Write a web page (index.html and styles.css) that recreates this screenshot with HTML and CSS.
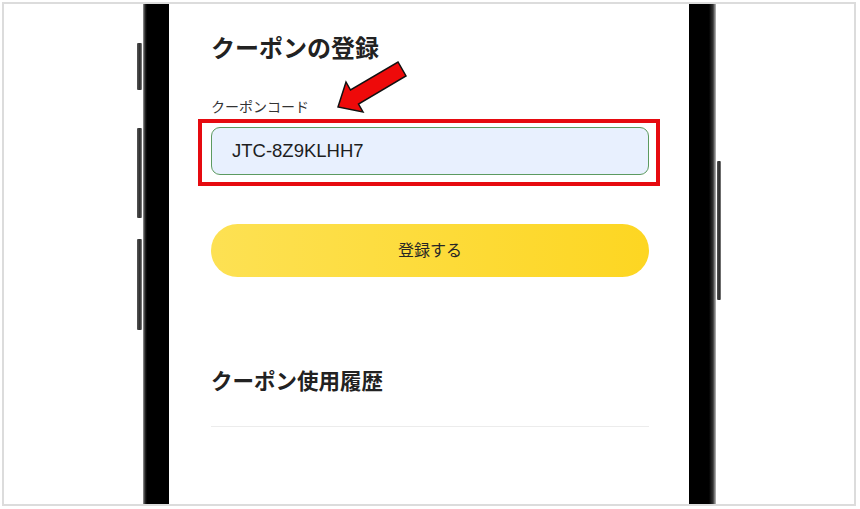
FILE: index.html
```html
<!DOCTYPE html>
<html lang="ja">
<head>
    <meta charset="UTF-8">
    <meta name="viewport" content="width=device-width, initial-scale=1.0">
    <title>クーポンの登録</title>
    <link rel="stylesheet" href="styles.css">
</head>
<body>
    <div class="frame">
        <div class="phone">
            <span class="side-btn left btn-1"></span>
            <span class="side-btn left btn-2"></span>
            <span class="side-btn left btn-3"></span>
            <span class="side-btn right btn-4"></span>

            <div class="screen">
                <h1 class="title">クーポンの登録</h1>

                <form class="coupon-form">
                    <label for="couponCode" class="field-label">クーポンコード</label>
                    <div class="field-wrap highlight">
                        <input type="text" id="couponCode" name="couponCode" class="field" value="JTC-8Z9KLHH7">
                    </div>
                    <button type="submit" class="submit-btn">登録する</button>
                </form>

                <h2 class="subtitle">クーポン使用履歴</h2>
                <div class="history"></div>
            </div>
        </div>
    </div>

    <!-- pointer to the code field -->
    <svg class="pointer" width="86" height="62" viewBox="330 55 86 62">
        <polygon points="338,107 346,82 350.5,90 398,62 406,76 358.5,104 363,112"
                 fill="#ee0a0a" stroke="#111" stroke-width="1.5" stroke-linejoin="miter"/>
    </svg>
</body>
</html>
```

FILE: styles.css
```css
* {
    box-sizing: border-box;
}
body {
    margin: 0;
    position: relative;
    width: 860px;
    height: 509px;
    overflow: hidden;
    background: #fff;
    font-family: "Noto Sans CJK JP", "Noto Sans", sans-serif;
}
.frame {
    margin: 2px 4px 0 2px;
    height: 504px;
    border: 2px solid #dcdcdc;
    overflow: hidden;
}
.phone {
    position: relative;
    margin-left: 139px;
    width: 573px;
    height: 520px;
    padding: 0 27px 0 26px;
    background: linear-gradient(to right, #9a9a9a 0, #2a2a2a 2px, #000 4px, #000 calc(100% - 7px), #333 calc(100% - 3px), #bdbdbd 100%);
}
.side-btn {
    position: absolute;
    width: 5px;
    background: linear-gradient(to right, #555, #2b2b2b 60%, #8a8a8a);
    border-radius: 1px;
}
.side-btn.left {
    left: -6px;
}
.side-btn.right {
    right: -5px;
    width: 4px;
}
.btn-1 { top: 39px; height: 47px; }
.btn-2 { top: 124px; height: 90px; }
.btn-3 { top: 235px; height: 91px; }
.btn-4 { top: 157px; height: 139px; }

.screen {
    height: 100%;
    background: #fff;
    padding: 26px 40px 0 42px;
}
.title {
    margin: 0;
    font-size: 24px;
    line-height: 34px;
    font-weight: 700;
    color: #222;
}
.coupon-form {
    margin: 32px 0 0;
}
.field-label {
    display: block;
    font-size: 14px;
    line-height: 20px;
    color: #333;
    margin-bottom: 11px;
}
.field-wrap {
    position: relative;
}
.highlight::before {
    content: "";
    position: absolute;
    top: -8px;
    left: -13px;
    right: -11px;
    bottom: -11px;
    border: 4px solid #e60a10;
}
.field {
    position: relative;
    display: block;
    width: 100%;
    height: 48px;
    padding: 0 20px;
    border: 1px solid #5c9a60;
    border-radius: 9px;
    background: #e8f0fe;
    font-family: "Liberation Sans", Arial, sans-serif;
    font-size: 18.5px;
    color: #1e1e1e;
    outline: none;
}
.submit-btn {
    display: block;
    width: 100%;
    height: 53px;
    margin-top: 49px;
    padding: 0 0 3px;
    border: none;
    border-radius: 27px;
    background: linear-gradient(to right, #fde153, #fdd622);
    font-family: "Noto Sans CJK JP", "Noto Sans", sans-serif;
    font-size: 16px;
    color: #262626;
    cursor: pointer;
}
.subtitle {
    margin: 88px 0 0;
    font-size: 21.5px;
    line-height: 30px;
    font-weight: 700;
    color: #222;
}
.history {
    margin-top: 31px;
    border-top: 1px solid #ececec;
}
.pointer {
    position: absolute;
    left: 330px;
    top: 55px;
}
```
